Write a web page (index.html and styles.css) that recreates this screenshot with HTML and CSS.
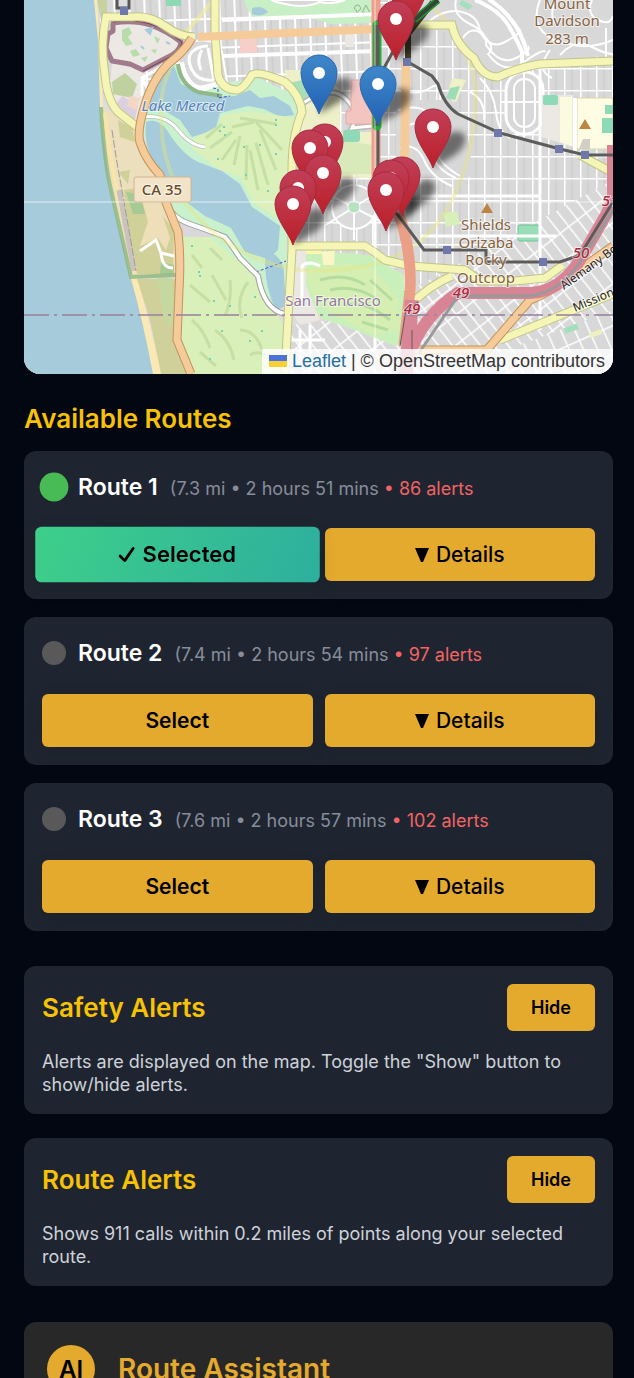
FILE: index.html
```html
<!DOCTYPE html>
<html lang="en">
<head>
    <meta charset="UTF-8">
    <meta name="viewport" content="width=device-width, initial-scale=1.0">
    <title>Safe Routes</title>
    <link rel="stylesheet" href="styles.css">
</head>
<body>
    <main class="app">
        <section class="map" aria-label="Route map">
            <svg class="map-canvas" viewBox="24 0 589 374" preserveAspectRatio="xMidYMid slice" aria-hidden="true">
                <defs>
                    <pattern id="blocksNorth" width="15" height="29" patternUnits="userSpaceOnUse" patternTransform="translate(8 -4) rotate(-2)">
                        <rect width="15" height="29" fill="#d9d8d8"/>
                        <path d="M7 0V29" stroke="#c6c5c5" stroke-width="1"/>
                        <path d="M0 0V29M0 0H15" stroke="#fff" stroke-width="4"/>
                    </pattern>
                    <pattern id="blocksEast" width="16" height="22" patternUnits="userSpaceOnUse" patternTransform="translate(4 2)">
                        <rect width="16" height="22" fill="#d9d8d8"/>
                        <path d="M8 0V22" stroke="#c9c8c8" stroke-width="1"/>
                        <path d="M0 0V22M0 0H16" stroke="#fff" stroke-width="3"/>
                    </pattern>
                    <pattern id="blocksSouth" width="11" height="24" patternUnits="userSpaceOnUse" patternTransform="rotate(-38)">
                        <rect width="11" height="24" fill="#d9d8d8"/>
                        <path d="M0 0V24M0 0H11" stroke="#fff" stroke-width="3"/>
                    </pattern>
                    <pattern id="blocksMission" width="13" height="26" patternUnits="userSpaceOnUse" patternTransform="rotate(-24)">
                        <rect width="13" height="26" fill="#d9d8d8"/>
                        <path d="M0 0V26M0 0H13" stroke="#fff" stroke-width="3"/>
                    </pattern>
                    <linearGradient id="pinRed" x1="0" y1="0" x2="0" y2="1">
                        <stop offset="0" stop-color="#c13f58"/>
                        <stop offset="1" stop-color="#bb1f27"/>
                    </linearGradient>
                    <linearGradient id="pinBlue" x1="0" y1="0" x2="0" y2="1">
                        <stop offset="0" stop-color="#3f87c9"/>
                        <stop offset="1" stop-color="#2262b5"/>
                    </linearGradient>
                    <filter id="soft" x="-30%" y="-30%" width="160%" height="160%">
                        <feGaussianBlur stdDeviation="3"/>
                    </filter>
                    <g id="shadow">
                        <path d="M0 0L6 -24Q18 -42 31 -34Q36 -24 22 -13Z" fill="#000" opacity=".5" filter="url(#soft)"/>
                    </g>
                    <path id="pin" d="M0 0C-4 -12 -18 -26 -18 -41A18 18 0 0 1 18 -41C18 -26 4 -12 0 0Z"/>
                    <g id="redPin">
                        <use href="#pin" fill="url(#pinRed)" stroke="#a32c40" stroke-width="1"/>
                        <circle cy="-41" r="6" fill="#fff"/>
                    </g>
                    <g id="bluePin">
                        <use href="#pin" fill="url(#pinBlue)" stroke="#2c6aab" stroke-width="1"/>
                        <circle cy="-41" r="6" fill="#fff"/>
                    </g>
                </defs>

                <!-- city blocks -->
                <rect x="24" width="589" height="374" fill="#dedddd"/>
                <path d="M100 0H378V90H100Z" fill="url(#blocksNorth)"/>
                <path d="M378 0H613V290H290V90H378Z" fill="url(#blocksEast)"/>
                <path d="M410 290L613 180V374H410Z" fill="url(#blocksSouth)"/>
                <path d="M520 345L613 310V374H500Z" fill="url(#blocksMission)"/>
                <path d="M290 325L330 320L415 350V374H285Z" fill="url(#blocksSouth)"/>

                <!-- winding streets around Mount Davidson -->
                <path d="M420 0H613V55L540 62L500 78L475 62L455 35L418 25Z" fill="#d9d8d8"/>
                <g fill="none" stroke="#fff" stroke-width="2">
                    <path d="M428 22Q445 8 462 12T480 32Q490 50 505 42T520 30Q508 18 500 8L488 0"/>
                    <path d="M456 0Q452 15 470 24T486 45Q500 66 516 58T528 46"/>
                    <path d="M463 38Q472 24 484 36T488 54Q504 76 524 62T545 52"/>
                    <path d="M540 0Q532 20 543 32T570 44Q590 50 613 40"/>
                    <path d="M557 0Q548 14 556 24M560 55Q575 38 590 46T613 54"/>
                    <path d="M592 0Q586 14 598 20T613 16M606 28V60M550 50Q535 70 552 78"/>
                </g>
                <path d="M475 0Q500 10 510 28T522 52V66M490 0Q520 20 528 56" fill="none" stroke="#fff" stroke-width="4"/>
                <path d="M396 100H452Q466 120 470 150T466 178H396Z" fill="#d9d8d8"/>
                <g fill="none" stroke="#fff" stroke-width="2">
                    <path d="M398 110Q416 104 428 112T436 140T460 176M396 90Q418 96 430 88T440 100"/>
                    <path d="M402 130Q414 118 424 128T432 156Q440 172 456 178M400 148Q416 142 424 160T452 186"/>
                    <path d="M470 92Q486 100 484 120M480 78Q494 92 496 112T510 138"/>
                </g>
                <rect x="506" y="72" width="37" height="62" rx="18" fill="#d9d8d8" stroke="#fff" stroke-width="3"/>
                <rect x="514" y="79" width="21" height="48" rx="10" fill="none" stroke="#fff" stroke-width="2"/>
                <path d="M524 64V140M500 102H552" stroke="#fff" stroke-width="2"/>

                <!-- parks, schools and shops -->
                <path d="M244 0H376V23L330 24Q300 12 278 20H255Q246 8 244 0Z" fill="#c8efc5"/>
                <path d="M272 0H345Q330 5 320 2Q306 8 290 5T272 0Z" fill="#d9d8d8" stroke="#fff" stroke-width="2"/>
                <path d="M252 8Q262 5 268 12Q260 18 252 14Z" fill="#a6cbdb"/>
                <path d="M357 17V11M357 11a3 3 0 1 1 1 0M366 17V13M366 5l4 8h-8z" fill="none" stroke="#87b58a" stroke-width="1"/>
                <rect x="240" y="39" width="17" height="14" fill="#f6cfc8"/>
                <rect x="166" y="0" width="15" height="6" fill="#8dd9b4"/>
                <rect x="345" y="34" width="9" height="13" fill="#ece7e2"/>
                <path d="M285 70H320L340 90V132H372V178H300L290 120Z" fill="#eef0c9"/>
                <path d="M286 84L302 80L310 100L298 112Z" fill="#a6dfb8"/>
                <path d="M326 138L372 145V174H336Z" fill="#d8e9ba"/>
                <path d="M300 105Q330 84 345 98T352 128L372 126" fill="none" stroke="#bab9b9" stroke-width="6"/>
                <path d="M300 105Q330 84 345 98T352 128L372 126" fill="none" stroke="#fff" stroke-width="3"/>
                <path d="M351 80H372V124H346V111H351Z" fill="#f3c5c0" stroke="#e5aaa4"/>
                <rect x="343" y="130" width="17" height="12" rx="3" fill="#8ed9b6"/>
                <path d="M452 78L466 80L456 102L447 96Z" fill="#eff1c9"/>
                <path d="M450 88L460 86L455 100L446 98Z" fill="#9edcb7"/>
                <path d="M462 0L473 6L468 10L459 4Z" fill="#a2dfbc"/>
                <path d="M542 95H573V147L542 137Z" fill="#ece8e3"/>
                <path d="M560 97H572V146L560 142Z" fill="#fdfbdf"/>
                <rect x="543" y="95" width="15" height="10" rx="2" fill="#8ed9b6"/>
                <path d="M577 98H613V149H577Z" fill="#fefce2" stroke="#d9d7b0"/>
                <path d="M605 105H613V114H605ZM602 118H613V133H602Z" fill="#8ed9b6"/>
                <path d="M583 139H590V149H579Z" fill="#d2cec3"/>
                <path d="M575 98V155" stroke="#fff" stroke-width="4"/>
                <rect x="518" y="225" width="22" height="16" rx="2" fill="#98dfb9" stroke="#69c594"/>
                <path d="M443 213L457 211L460 224L446 227Z" fill="#d7efb8"/>
                <rect x="564" y="326" width="14" height="6" fill="#a3dfbd" transform="rotate(-20 570 328)"/>
                <rect x="590" y="331" width="12" height="5" fill="#edf0bf" transform="rotate(-20 596 334)"/>
                <path d="M540 63V330M375 60V350M420 196H540M420 236H556" stroke="#fff" stroke-width="3" fill="none"/>
                <circle cx="354" cy="207" r="22" fill="#dcdbdb" stroke="#fff" stroke-width="2"/>
                <path d="M354 175V240M320 190L390 226M324 226L388 186" stroke="#fff" stroke-width="2"/>
                <circle cx="354" cy="207" r="6" fill="#b6e3bf" stroke="#fff"/>

                <!-- ocean and beach -->
                <path d="M24 0H97L103 107L111 180L137 275L162 374H24Z" fill="#fbe9b5"/>
                <path d="M24 0H94L98 40L100 107Q106 160 110 190L130 275Q144 325 153 374H24Z" fill="#a6cbdb"/>
                <path d="M97 0H107V14L101 20Z" fill="#c7d2a1"/>
                <path d="M101 107L108 110L136 128L139 150L160 175L174 225L176 276L131 276L111 195Z" fill="#ebdfbd"/>
                <path d="M118 120L132 128L135 142L120 137ZM118 172L130 170L128 184ZM124 190L140 188L174 230L173 274L137 274L127 230Z" fill="#cfd199"/>
                <path d="M141 196L148 222L140 246L158 238L166 250L170 238L160 208Z" fill="#efdfb8"/>
                <path d="M126 192L140 194L145 214L133 214ZM161 262L174 265V274H160Z" fill="#a7c993"/>
                <path d="M137 279H176L174 340L190 374H161L150 320Z" fill="#d0d19a"/>
                <path d="M101 107Q104 160 111 190L131 277L178 275" fill="none" stroke="#85b478" stroke-width="4" opacity=".75"/>
                <path d="M105 113Q110 160 117 190L135 272" fill="none" stroke="#f9e5aa" stroke-width="4"/>
                <path d="M119 190L134 271" fill="none" stroke="#c9c2be" stroke-width="5"/>
                <path d="M112 130Q117 165 122 190L136 271" fill="none" stroke="#9f9a9b" stroke-width="1" stroke-dasharray="8 2"/>
                <path d="M140 251L156 240L161 253L174 256M161 253Q162 268 173 268" fill="none" stroke="#fff" stroke-width="3"/>

                <!-- Lake Merced and golf courses -->
                <path d="M140 120L150 88L174 64H185L202 86L245 80L254 76L292 94L302 112L294 170L286 250L293 290L275 312L180 260L176 240L166 193L148 150Z" fill="#c9f1ce"/>
                <path d="M112 62L145 72L142 110L136 128L118 112L110 90Z" fill="#ebe7e2"/>
                <path d="M112 82L125 73L137 84L132 98L113 94Z" fill="#bfd19f"/>
                <path d="M114 107L122 96L138 105L135 120Z" fill="#dcd0df"/>
                <path d="M130 96L140 98L136 110L127 106Z" fill="#f4d6c4"/>
                <path d="M174 66L181 84L198 91L216 97L235 96L250 90L260 98L274 96L290 106L294 115L280 117L264 109L248 106L232 110L220 113L216 127L205 133L192 137L180 120L165 111L143 110L149 94L162 76Z" fill="#a6cbdb"/>
                <path d="M146 122Q160 116 172 138Q185 156 198 162L222 171L240 184L252 207L280 226L278 250L268 259L245 252L231 228L205 216L185 201L168 185L150 155Q144 140 146 122Z" fill="#a6cbdb"/>
                <path d="M266 249Q285 258 284 275L286 306L276 310Q262 282 266 249Z" fill="#a6cbdb"/>
                <path d="M194 138L218 127L222 115L252 111L294 118L290 170L278 200L281 220L255 204L240 177L218 169L192 148Z" fill="#dbf0bb"/>
                <path d="M184 237L210 237L240 262L262 285L283 325L282 374H194L180 335L182 280Z" fill="#daf0ba"/>
                <path d="M178 220L206 228L214 237H184Z" fill="#dad8da"/>
                <path d="M157 278L172 278L176 330L164 320Z" fill="#c5d8a0"/>
                <g fill="none" stroke="#c6dfa4" stroke-width="3">
                    <path d="M206 138L222 124M210 148L232 132M222 160L236 140M234 165L240 136M246 180L247 145M258 190L250 150M268 185L256 143M276 170L260 130M282 150L256 122M240 118L276 124M232 127L254 122"/>
                    <path d="M192 255L202 268M210 248L222 260M190 285L210 302M212 275L226 300M230 280Q232 300 225 316M248 282Q235 300 242 318M192 320Q204 330 210 348M215 330Q230 340 234 360M240 330Q256 330 262 350M200 352L216 366M250 355Q262 348 274 362"/>
                </g>
                <path d="M224 126v2M220 130v2M225 134v2M276 119v2M276 124v2M244 146v2M260 144v2M276 153v2M218 158v2M246 174v2M268 190v2M192 245v2M199 271v2M200 275v2M214 300v2M230 305v2M222 330v2M210 358v2M250 340v2M255 296v2M262 330v2" stroke="#74d3aa" stroke-width="2"/>
                <path d="M190 42Q215 36 222 52L227 82L205 90Q194 90 186 76L178 60Z" fill="#d9d8d8" stroke="#fff" stroke-width="2"/>
                <path d="M216 84Q196 92 186 80T178 62M214 80Q198 82 192 70T192 52T208 46M208 48L214 80M202 50Q196 60 201 70" fill="none" stroke="#fff" stroke-width="3"/>
                <path d="M178 64Q180 84 198 92L222 96" fill="none" stroke="#91b988" stroke-width="4"/>
                <path d="M182 62Q186 84 200 88L216 84" fill="none" stroke="#fff" stroke-width="4"/>
                <path d="M213 88L218 89V98L230 96M256 272L286 261" fill="none" stroke="#4753c4" stroke-width="1" stroke-dasharray="3 2"/>

                <!-- zoo -->
                <path d="M113 23Q135 20 150 25T181 42Q180 52 168 57L143 70L130 64L112 61L106 48L108 34L113 31Z" fill="#ece9e5" stroke="#a07b8c" stroke-width="5" stroke-linejoin="round"/>
                <path d="M113 22Q135 19 150 24T182 42Q180 53 168 58L143 71" fill="none" stroke="#784459" stroke-width="1"/>
                <path d="M122 30l7-3 3 6-4 4 5 7-7 2-4-6zM130 51l6-2 4 6-7 2zM141 58l7-2-3 6zM154 36l6 3-3 5zM151 50l6-1-2 5z" fill="#b9dcab"/>
                <path d="M146 30l6-2-2 6zM141 46l3 3M166 42l4 2" stroke="#a6cbdb" stroke-width="2" fill="#a6cbdb"/>

                <!-- southern golf course -->
                <path d="M300 254Q360 250 376 258L404 275L405 335L396 346L355 330L320 318L300 290Z" fill="#c9f0ba"/>
                <path d="M304 270Q350 258 375 270L398 300L400 330L375 335L340 318L315 302Z" fill="#d5efb2"/>
                <g fill="none" stroke="#b5dca0" stroke-width="3">
                    <path d="M320 280Q345 272 365 285M330 290Q355 284 378 300M345 305Q365 300 390 320M370 280L392 300M362 322L388 330"/>
                </g>
                <path d="M296 250H306V285L320 320L300 325L290 310Z" fill="#ebe7e2"/>
                <path d="M302 300V266Q308 260 320 266M300 330V360M310 325V374M290 340H325" fill="none" stroke="#fff" stroke-width="3"/>
                <path d="M306 248H322V254H306Z" fill="#fbf7ad"/>
                <path d="M322 252L335 250L334 265L323 265Z" fill="#f8f7c5"/>

                <!-- local roads -->
                <path d="M143 117Q165 114 178 130T205 147" fill="none" stroke="#a7aaa6" stroke-width="4"/>
                <path d="M143 117Q165 114 178 130T205 147" fill="none" stroke="#fff" stroke-width="3"/>
                <path d="M142 96V78L165 65M142 78L148 90" fill="none" stroke="#fff" stroke-width="3"/>
                <path d="M166 203Q172 218 190 224T225 237Q234 248 240 258L258 276Q264 310 285 314" fill="none" stroke="#9da09c" stroke-width="6"/>
                <path d="M166 203Q172 218 190 224T225 237Q234 248 240 258L258 276Q264 310 285 314" fill="none" stroke="#fff" stroke-width="4"/>
                <path d="M222 56L378 51M222 20L378 14" fill="none" stroke="#fff" stroke-width="4"/>
                <path d="M170 70Q158 90 162 130Q162 160 185 203Q230 260 300 270Q400 276 440 220Q475 170 476 90Q470 40 430 5" fill="none" stroke="#e7e77d" stroke-width="4" opacity=".4"/>
                <path d="M186 32L214 0" stroke="#f1ee91" stroke-width="4" opacity=".6"/>

                <!-- yellow roads -->
                <g fill="none" stroke="#c0c48c" stroke-width="9">
                    <path d="M195 37Q180 37 165 26T132 17H106Q100 45 105 75Q107 100 118 112L137 127"/>
                    <path d="M215 0V32L218 75Q222 90 238 90Q244 88 252 75Q258 70 285 82Q300 95 302 112Q292 135 292 170L292 250L289 300L285 374"/>
                    <path d="M290 246H365Q375 252 385 260L410 266L465 270L480 281H515L545 278L563 265"/>
                    <path d="M412 25H452Q456 45 474 58Q482 77 498 77Q520 67 540 64L613 61"/>
                    <path d="M410 305Q430 285 452 276M500 340L613 294M580 155L613 173"/>
                </g>
                <g fill="none" stroke="#f5f6b6" stroke-width="7">
                    <path d="M195 37Q180 37 165 26T132 17H106Q100 45 105 75Q107 100 118 112L137 127"/>
                    <path d="M215 0V32L218 75Q222 90 238 90Q244 88 252 75Q258 70 285 82Q300 95 302 112Q292 135 292 170L292 250L289 300L285 374"/>
                    <path d="M290 246H365Q375 252 385 260L410 266L465 270L480 281H515L545 278L563 265"/>
                    <path d="M412 25H452Q456 45 474 58Q482 77 498 77Q520 67 540 64L613 61"/>
                    <path d="M410 305Q430 285 452 276M500 340L613 294M580 155L613 173"/>
                </g>

                <!-- orange roads -->
                <g fill="none" stroke="#c3945a" stroke-width="9">
                    <path d="M192 38Q184 52 168 64Q152 80 144 108Q136 135 141 145Q146 160 160 175L165 200L178 232Q181 260 179 290L177 340L191 374"/>
                    <path d="M485 352L530 300Q545 295 565 280L613 246M405 350L485 350"/>
                </g>
                <g fill="none" stroke="#f5cb99" stroke-width="7">
                    <path d="M192 38Q184 52 168 64Q152 80 144 108Q136 135 141 145Q146 160 160 175L165 200L178 232Q181 260 179 290L177 340L191 374"/>
                    <path d="M198 37L378 29" stroke-width="8"/>
                    <path d="M406 60L404 200" stroke-width="9"/>
                    <path d="M485 352L530 300Q545 295 565 280L613 246M405 350L485 350"/>
                </g>

                <!-- highways and rail -->
                <path d="M376 0V190" stroke="#ee9f8c" stroke-width="9"/>
                <path d="M398 212Q412 250 410 290L404 345" fill="none" stroke="#eaa087" stroke-width="11"/>
                <path d="M412 300L406 374" stroke="#d78695" stroke-width="14"/>
                <path d="M412 348Q425 315 458 293H530Q560 292 580 260L606 215L613 200V145" fill="none" stroke="#d98494" stroke-width="12"/>
                <path d="M419 353L458 296H530Q560 292 580 262L613 210" fill="none" stroke="#999" stroke-width="3"/>
                <path d="M400 346L406 310L418 302M412 330V350" fill="none" stroke="#645c5c" stroke-width="1"/>
                <g fill="none" stroke="#5c5c5a" stroke-width="3">
                    <path d="M378 20V200L398 215L424 250H486V262H560L580 255L613 202"/>
                    <path d="M384 68L396 46M408 62L432 76L438 84Q444 105 458 114L500 133L560 149L585 155H613"/>
                </g>
                <path d="M408 64V34L433 2" fill="none" stroke="#45402a" stroke-width="6"/>
                <path d="M377 25V126" fill="none" stroke="#26ac3e" stroke-width="9" stroke-linecap="round"/>
                <path d="M377 25V126" fill="none" stroke="#5c5b55" stroke-width="5"/>
                <path d="M414 20L438 0" stroke="#24933b" stroke-width="7"/>
                <path d="M414 20L438 0" stroke="#344534" stroke-width="4"/>
                <path d="M117 0V8H129V0" fill="#dedddd" stroke="#575757" stroke-width="3"/>
                <path d="M120 7h8v8h-8zM403 58h8v8h-8zM494 129h8v8h-8zM555 145h8v8h-8zM581 151h8v8h-8zM443 246h8v8h-8zM539 258h8v8h-8z" fill="#6e78ab"/>
                <path d="M24 315H613" stroke="#9c849f" stroke-width="2" stroke-dasharray="25 5 3 5" opacity=".8"/>
                <path d="M24 202H613M375 0V374" stroke="#fff" stroke-width="1" opacity=".65"/>

                <!-- map labels -->
                <path d="M579 129L585 119L591 129ZM481 213L487 203L493 213Z" fill="#bd8544"/>
                <g class="map-label brown">
                    <text x="567" y="9">Mount</text>
                    <text x="567" y="26">Davidson</text>
                    <text x="567" y="44">283 m</text>
                    <text x="486" y="230">Shields</text>
                    <text x="486" y="248">Orizaba</text>
                    <text x="486" y="265">Rocky</text>
                    <text x="486" y="283">Outcrop</text>
                </g>
                <text class="map-label lake" x="183" y="111">Lake Merced</text>
                <text class="map-label city" x="333" y="306">San Francisco</text>
                <g class="map-label exit">
                    <text x="412" y="314">49</text>
                    <text x="461" y="298">49</text>
                    <text x="581" y="258">50</text>
                    <text x="610" y="206">51</text>
                </g>
                <g class="map-label street">
                    <text x="564" y="290" transform="rotate(-36 564 290)">Alemany Bo</text>
                    <text x="575" y="312" transform="rotate(-23 575 312)">Mission</text>
                </g>
                <rect x="134" y="177" width="57" height="25" rx="2" fill="#f2e3c8" stroke="#d1b68d"/>
                <text class="map-label shield" x="162" y="195">CA 35</text>

                <!-- markers -->
                <g>
                    <use href="#shadow" x="396" y="60"/>
                    <use href="#shadow" x="319" y="114"/>
                    <use href="#shadow" x="378" y="125"/>
                    <use href="#shadow" x="433" y="168"/>
                    <use href="#shadow" x="323" y="214"/>
                    <use href="#shadow" x="293" y="245"/>
                    <use href="#shadow" x="386" y="231"/>
                    <use href="#shadow" x="403" y="216"/>
                    <use href="#redPin" x="408" y="30"/>
                    <use href="#redPin" x="396" y="60"/>
                    <use href="#bluePin" x="319" y="114"/>
                    <use href="#bluePin" x="378" y="125"/>
                    <use href="#redPin" x="433" y="168"/>
                    <use href="#redPin" x="325" y="183"/>
                    <use href="#redPin" x="310" y="189"/>
                    <use href="#redPin" x="323" y="214"/>
                    <use href="#redPin" x="402" y="216"/>
                    <use href="#redPin" x="391" y="219"/>
                    <use href="#redPin" x="298" y="229"/>
                    <use href="#redPin" x="293" y="245"/>
                    <use href="#redPin" x="386" y="231"/>
                </g>
            </svg>
            <div class="attribution">
                <svg class="flag" viewBox="0 0 18 12" aria-hidden="true">
                    <path fill="#4c73dc" d="M0 0h18v6H0z"/>
                    <path fill="#f8cf35" d="M0 6h18v6H0z"/>
                </svg>
                <a href="#">Leaflet</a> | © OpenStreetMap contributors
            </div>
        </section>

        <section class="routes">
            <h2>Available Routes</h2>
            <article class="card">
                <div class="route-head">
                    <span class="dot active"></span>
                    <h3>Route 1</h3>
                    <p class="meta">(7.3 mi • 2 hours 51 mins <span class="alerts">• 86 alerts</span></p>
                </div>
                <div class="actions">
                    <button class="btn selected" type="button"><svg class="check" viewBox="0 0 18 18" aria-hidden="true"><path d="M2 10l5 5L16 2"/></svg>Selected</button>
                    <button class="btn details" type="button"><svg class="arrow" viewBox="0 0 14 14" aria-hidden="true"><path d="M0 0h14L8 14H6z"/></svg>Details</button>
                </div>
            </article>
            <article class="card">
                <div class="route-head">
                    <span class="dot"></span>
                    <h3>Route 2</h3>
                    <p class="meta">(7.4 mi • 2 hours 54 mins <span class="alerts">• 97 alerts</span></p>
                </div>
                <div class="actions">
                    <button class="btn" type="button">Select</button>
                    <button class="btn details" type="button"><svg class="arrow" viewBox="0 0 14 14" aria-hidden="true"><path d="M0 0h14L8 14H6z"/></svg>Details</button>
                </div>
            </article>
            <article class="card">
                <div class="route-head">
                    <span class="dot"></span>
                    <h3>Route 3</h3>
                    <p class="meta">(7.6 mi • 2 hours 57 mins <span class="alerts">• 102 alerts</span></p>
                </div>
                <div class="actions">
                    <button class="btn" type="button">Select</button>
                    <button class="btn details" type="button"><svg class="arrow" viewBox="0 0 14 14" aria-hidden="true"><path d="M0 0h14L8 14H6z"/></svg>Details</button>
                </div>
            </article>
        </section>

        <section class="panels">
            <article class="card">
                <div class="panel-head">
                    <h2>Safety Alerts</h2>
                    <button class="btn hide" type="button">Hide</button>
                </div>
                <p class="note">Alerts are displayed on the map. Toggle the "Show" button to show/hide alerts.</p>
            </article>
            <article class="card">
                <div class="panel-head">
                    <h2>Route Alerts</h2>
                    <button class="btn hide" type="button">Hide</button>
                </div>
                <p class="note">Shows 911 calls within 0.2 miles of points along your selected route.</p>
            </article>
        </section>

        <section class="assistant">
            <span class="avatar">AI</span>
            <h2>Route Assistant</h2>
        </section>
    </main>
</body>
</html>
```
FILE: styles.css
```css
* {
    box-sizing: border-box;
}

body {
    margin: 0;
    background-color: #030712;
    color: #fff;
    font-family: Inter, "Liberation Sans", sans-serif;
}

h2, h3, p {
    margin: 0;
}

h2 {
    font-size: 26px;
    line-height: 36px;
    font-weight: 600;
    color: #f7c204;
}

.app {
    height: 100vh;
    padding: 0 21px 0 24px;
    overflow-y: auto;
    scrollbar-width: none;
}

/* Map */
.map {
    position: relative;
    height: 374px;
    border-radius: 0 0 16px 16px;
    overflow: hidden;
}

.map-canvas {
    display: block;
    width: 100%;
    height: 100%;
}

.map-label {
    font-family: "Noto Sans", sans-serif;
    text-anchor: middle;
    paint-order: stroke;
    stroke: rgba(255, 255, 255, 0.6);
    stroke-width: 2px;
}

.brown {
    font-size: 15px;
    fill: #86633f;
}

.lake {
    font-size: 15px;
    font-style: italic;
    fill: #5484b8;
}

.city {
    font-size: 15px;
    fill: #93799d;
}

.exit {
    font-size: 15px;
    font-style: italic;
    font-weight: 500;
    fill: #a82b3c;
}

.street {
    font-size: 12px;
    fill: #222;
    text-anchor: start;
}

.shield {
    font-size: 15px;
    font-weight: 500;
    fill: #664a2a;
}

.attribution {
    position: absolute;
    right: 0;
    bottom: 0;
    padding: 0 8px 0 7px;
    background-color: rgba(255, 255, 255, 0.8);
    color: #333;
    font: 18px/25px "Liberation Sans", Arial, sans-serif;
}

.attribution a {
    color: #1f6fa5;
    text-decoration: none;
}

.flag {
    width: 18px;
    height: 12px;
}

/* Cards */
.routes {
    display: flex;
    flex-direction: column;
    gap: 18px;
    padding-top: 27px;
}

.routes h2 {
    margin-bottom: -4px;
}

.card {
    padding: 18px;
    border-radius: 12px;
    background-color: #1f2530;
}

.route-head {
    display: flex;
    align-items: center;
    gap: 12px;
    height: 36px;
    margin-bottom: 23px;
}

.dot {
    width: 24px;
    height: 24px;
    border-radius: 50%;
    background-color: #595959;
}

.dot.active {
    background-color: #48bb55;
    transform: scale(1.2);
}

.route-head h3 {
    font-size: 23px;
    line-height: 36px;
    font-weight: 600;
}

.meta {
    padding-top: 4px;
    font-size: 18px;
    line-height: 24px;
    color: #878d9a;
}

.alerts {
    color: #f26464;
}

.actions {
    display: grid;
    grid-template-columns: 1fr 1fr;
    gap: 12px;
}

.btn {
    display: flex;
    align-items: center;
    justify-content: center;
    gap: 7px;
    height: 53px;
    padding: 0 24px;
    border: none;
    border-radius: 6px;
    background-color: #e4aa2e;
    box-shadow: 0 6px 18px rgba(0, 0, 0, 0.1);
    color: #000;
    font-family: inherit;
    font-size: 21px;
    font-weight: 600;
    cursor: pointer;
}

.btn.details {
    font-weight: 500;
}

.btn.selected {
    background: linear-gradient(110deg, #3ecf8a, #2daf9e);
    transform: scale(1.05);
}

.check {
    width: 16px;
    height: 16px;
    fill: none;
    stroke: #000;
    stroke-width: 3;
    stroke-linecap: round;
    stroke-linejoin: round;
}

.arrow {
    width: 14px;
    height: 14px;
}

/* Alert panels */
.panels {
    display: flex;
    flex-direction: column;
    gap: 24px;
    padding: 35px 0 36px;
}

.panel-head {
    display: flex;
    align-items: center;
    justify-content: space-between;
    margin-bottom: 19px;
}

.btn.hide {
    height: 47px;
    font-size: 18px;
    box-shadow: none;
}

.note {
    font-size: 18px;
    line-height: 23px;
    color: #ced2d9;
}

/* Assistant */
.assistant {
    display: flex;
    align-items: center;
    gap: 23px;
    padding: 23px;
    border-radius: 12px;
    background-color: #282828;
}

.assistant h2 {
    font-size: 28px;
    color: #e4aa2e;
}

.avatar {
    display: flex;
    align-items: center;
    justify-content: center;
    width: 48px;
    height: 48px;
    border-radius: 50%;
    background-color: #e4aa2e;
    color: #000;
    font-size: 24px;
    font-weight: 600;
}
```
